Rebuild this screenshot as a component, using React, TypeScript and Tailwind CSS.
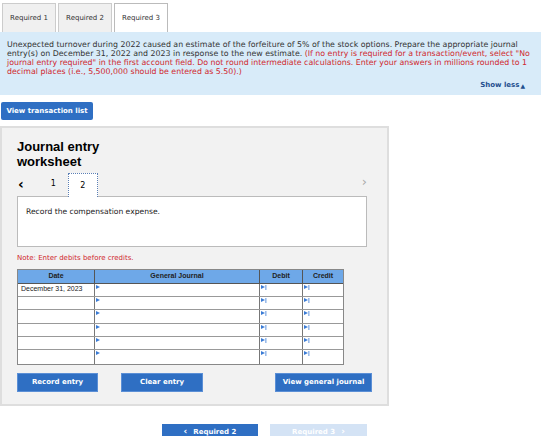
import React from "react";

const verdana = { fontFamily: '"DejaVu Sans", Verdana, sans-serif' };
const arial = { fontFamily: '"Liberation Sans", Arial, sans-serif' };

function Marker({ bar = false }: { bar?: boolean }) {
  return (
    <svg width="6" height="6" viewBox="0 0 6 6" className="absolute left-[1px] top-[1px]">
      <polygon points="0,0 4,2 0,4" fill="#3a7bd5" />
      {bar && <rect x="4.5" y="0" width="0.8" height="5" fill="#3a7bd5" />}
    </svg>
  );
}

export default function App() {
  const rows = ["December 31, 2023", "", "", "", "", ""];
  const rowH = [13, 13, 14, 13, 13, 14];
  return (
    <div className="w-[560px] h-[436px] bg-white overflow-hidden relative" style={verdana}>
      {/* Tabs */}
      <div className="flex gap-[2px] pl-[2px] pt-[3px] h-[32px]">
        {["Required 1", "Required 2", "Required 3"].map((t, i) => (
          <div
            key={t}
            className={
              "w-[54px] h-[29px] flex items-center justify-center text-[7px] text-[#333] border border-b-0 " +
              (i === 2 ? "bg-white border-[#bbb]" : "bg-[#f0f0f0] border-[#ccc]")
            }
          >
            {t}
          </div>
        ))}
      </div>
      {/* Info box */}
      <div className="w-[541px] h-[63px] bg-[#d8ebf9] relative pl-[7px] pt-[8px] text-[7.85px] leading-[9px] text-[#333]">
        <div className="whitespace-nowrap">
          Unexpected turnover during 2022 caused an estimate of the forfeiture of 5% of the stock options. Prepare the appropriate journal
          <br />
          entry(s) on December 31, 2022 and 2023 in response to the new estimate.{" "}
          <span className="text-[#d0282e]">(If no entry is required for a transaction/event, select "No</span>
          <br />
          <span className="text-[#d0282e]">
            journal entry required" in the first account field. Do not round intermediate calculations. Enter your answers in millions rounded to 1
            <br />
            decimal places (i.e., 5,500,000 should be entered as 5.50).)
          </span>
        </div>
        <div className="absolute right-[16px] top-[49px] text-[7px] font-bold text-[#1f4f8f] flex items-center gap-[1px]">
          Show less
          <span className="text-[6px]">▲</span>
        </div>
      </div>
      {/* View transaction list */}
      <div className="mt-[7px] ml-[1px] w-[92px] h-[18px] rounded-[2px] bg-[#2f6fc3] text-white text-[7px] font-bold flex items-center justify-center">
        View transaction list
      </div>
      {/* Panel */}
      <div className="mt-[6px] w-[389px] h-[280px] bg-[#f2f2f2] border-2 border-[#dedede] pl-[15px] pt-[11px]">
        <div className="text-[13px] leading-[15px] font-bold text-black" style={arial}>
          Journal entry
          <br />
          worksheet
        </div>
        {/* nav */}
        <div className="flex items-end h-[24px] mt-[3px] relative w-[350px]">
          <span className="ml-[1px] mb-[5px] text-[14px] leading-none font-bold text-black">&lsaquo;</span>
          <span className="ml-[27px] mb-[6px] text-[8px] text-black">1</span>
          <div className="ml-[12px] w-[30px] h-[24px] bg-white border border-dotted border-[#5b7fb5] border-b-0 flex items-center justify-center text-[8px] text-black relative top-[1px]">
            2
          </div>
          <span className="absolute right-[0px] top-[3px] text-[13px] leading-none text-[#aaa]">&rsaquo;</span>
        </div>
        {/* Record box */}
        <div className="w-[350px] h-[51px] bg-white border border-[#bbb] pl-[8px] pt-[9px] text-[7.6px] text-[#222]">
          Record the compensation expense.
        </div>
        <div className="mt-[6px] text-[7px] text-[#d0282e]">Note: Enter debits before credits.</div>
        {/* Table */}
        <div className="mt-[5px] w-[327px] border border-[#888]" style={arial}>
          <div className="flex h-[14px] bg-[#6ea8e8] border-b border-[#555] text-[7px] font-bold text-[#222]">
            <div className="w-[77px] border-r border-[#555] flex items-center justify-center">Date</div>
            <div className="w-[165px] border-r border-[#555] flex items-center justify-center">General Journal</div>
            <div className="w-[43px] border-r border-[#555] flex items-center justify-center">Debit</div>
            <div className="flex-1 flex items-center justify-center">Credit</div>
          </div>
          {rows.map((r, i) => (
            <div
              key={i}
              className={"flex bg-white " + (i < rows.length - 1 ? "border-b border-[#999]" : "")}
              style={{ height: rowH[i] }}
            >
              <div className="w-[77px] border-r border-[#777] text-[7px] text-[#222] pl-[3px] flex items-center">{r}</div>
              <div className="w-[165px] border-r border-[#777] relative">
                <Marker />
              </div>
              <div className="w-[43px] border-r border-[#777] relative">
                <Marker bar />
              </div>
              <div className="flex-1 relative">
                <Marker bar />
              </div>
            </div>
          ))}
        </div>
        {/* Buttons */}
        <div className="flex mt-[8px] text-[7px] font-bold text-white">
          <div className="w-[81px] h-[19px] bg-[#2f6fc3] border border-[#5b8fd6] flex items-center justify-center">Record entry</div>
          <div className="ml-[23px] w-[82px] h-[19px] bg-[#2f6fc3] border border-[#5b8fd6] flex items-center justify-center">Clear entry</div>
          <div className="ml-[72px] w-[97px] h-[19px] bg-[#2f6fc3] border border-[#5b8fd6] flex items-center justify-center">View general journal</div>
        </div>
      </div>
      {/* Bottom nav */}
      <div className="flex mt-[18px] ml-[162px] text-[7px] font-bold">
        <div className="w-[96px] h-[14px] bg-[#2f6fc3] text-white flex items-start justify-center pt-[3px] gap-[6px]">
          <span className="text-[9px] leading-[8px]">&lsaquo;</span>
          Required 2
        </div>
        <div className="ml-[12px] w-[97px] h-[14px] bg-[#d4e3f5] text-white flex items-start justify-center pt-[3px] gap-[6px]">
          Required 3
          <span className="text-[9px] leading-[8px]">&rsaquo;</span>
        </div>
      </div>
    </div>
  );
}
